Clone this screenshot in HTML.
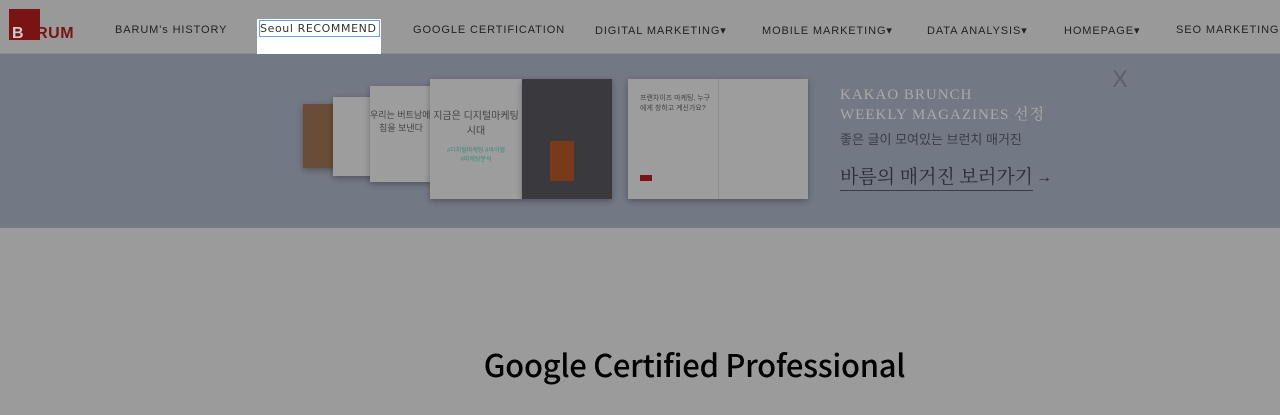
<!DOCTYPE html>
<html><head><meta charset="utf-8"><style>
body{margin:0;width:1280px;height:415px;overflow:hidden;background:#9b9b9b;font-family:"Liberation Sans","Noto Sans CJK KR",sans-serif;position:relative}
.nav{position:absolute;top:0;left:0;width:1280px;height:53px;background:#999;border-bottom:1px solid #8a8a8a}
.nav span{position:absolute;top:24px;font-size:11px;letter-spacing:0.9px;color:#222;white-space:nowrap}
.logo{position:absolute;left:9px;top:9px;width:31px;height:31px;background:#7a1414}
.logotxt{position:absolute;left:12px;top:25px;font-weight:bold;font-size:16px;color:#7a1414;letter-spacing:0.5px}
.banner{position:absolute;top:54px;left:0;width:1280px;height:174px;background:#737885}
.card{position:absolute;background:#9d9d9d;box-shadow:0 2px 6px rgba(0,0,0,.3);font-size:9px;color:#444;text-align:center;overflow:hidden}
.serif{font-family:"Liberation Serif","Noto Serif CJK SC",serif}
</style></head><body>
<div class="nav">
<div class="logo"></div><div class="logotxt"><b style="color:#ccc">B</b>ARUM</div>
<span style="left:115px">BARUM's HISTORY</span>
<div style="position:absolute;left:257px;top:19px;width:124px;height:37px;background:#fff;"></div>
<div style="position:absolute;left:259px;top:20px;width:121px;height:17px;border:1px solid #6aa0e0;box-sizing:border-box"></div>
<span style="left:260px;top:22px;font-family:'DejaVu Sans','Liberation Sans',sans-serif;font-size:11px;letter-spacing:0.6px;color:#333">Seoul RECOMMEND</span>
<span style="left:413px">GOOGLE CERTIFICATION</span>
<span style="left:595px">DIGITAL MARKETING▾</span>
<span style="left:762px">MOBILE MARKETING▾</span>
<span style="left:927px">DATA ANALYSIS▾</span>
<span style="left:1064px">HOMEPAGE▾</span>
<span style="left:1176px">SEO MARKETING</span>
</div>
<div class="banner">
<div class="card" style="left:303px;top:50px;width:40px;height:64px;background:#6a4d38"></div>
<div class="card" style="left:333px;top:43px;width:45px;height:79px"></div>
<div class="card" style="left:370px;top:32px;width:62px;height:96px"><div style="margin-top:22px;font-size:9px;white-space:nowrap">우리는 버트남에서<br>침을 보낸다</div></div>
<div class="card" style="left:430px;top:25px;width:92px;height:120px"><div style="margin-top:28px;font-size:10px;white-space:nowrap">지금은 디지털마케팅<br>시대</div><div style="color:#3a8a7a;font-size:6px;margin-top:8px">#디지털마케팅 #바이럴<br>#마케팅분석</div></div>
<div class="card" style="left:522px;top:25px;width:90px;height:120px;background:#3a3a3e"><div style="position:absolute;left:28px;top:62px;width:24px;height:40px;background:#7a3a1a"></div></div>
<div class="card" style="left:628px;top:25px;width:180px;height:120px;text-align:left"><div style="margin:14px 0 0 12px;font-size:7px;width:72px">프랜차이즈 마케팅, 누구에게 창하고 계신가요?</div><div style="position:absolute;left:90px;top:0;width:1px;height:120px;background:#8d8d8d"></div><div style="position:absolute;left:12px;top:96px;width:12px;height:6px;background:#7a1414"></div></div>
<div class="serif" style="position:absolute;left:840px;top:31px;color:#a9a9a9;font-size:15px;letter-spacing:1px;line-height:20px">KAKAO BRUNCH<br>WEEKLY MAGAZINES 선정</div>
<div style="position:absolute;left:840px;top:75px;color:#3a3d48;font-size:13px">좋은 글이 모여있는 브런치 매거진</div>
<div class="serif" style="position:absolute;left:840px;top:112px;color:#2a2d38;font-size:19px;border-bottom:1px solid #3a3d48;line-height:24px">바름의 매거진 보러가기</div>
<div style="position:absolute;left:1036px;top:115px;color:#2a2d38;font-size:16px">→</div>
<div style="position:absolute;left:1112px;top:12px;color:#5c606b;font-size:24px;font-family:'Liberation Sans',sans-serif">X</div>
</div>
<div style="position:absolute;left:474px;top:342px;width:441px;text-align:center;font-family:'Noto Sans CJK KR','DejaVu Sans',sans-serif;font-weight:500;font-size:31px;color:#000;letter-spacing:-0.3px;white-space:nowrap;line-height:44px">Google Certified Professional</div>
</body></html>
